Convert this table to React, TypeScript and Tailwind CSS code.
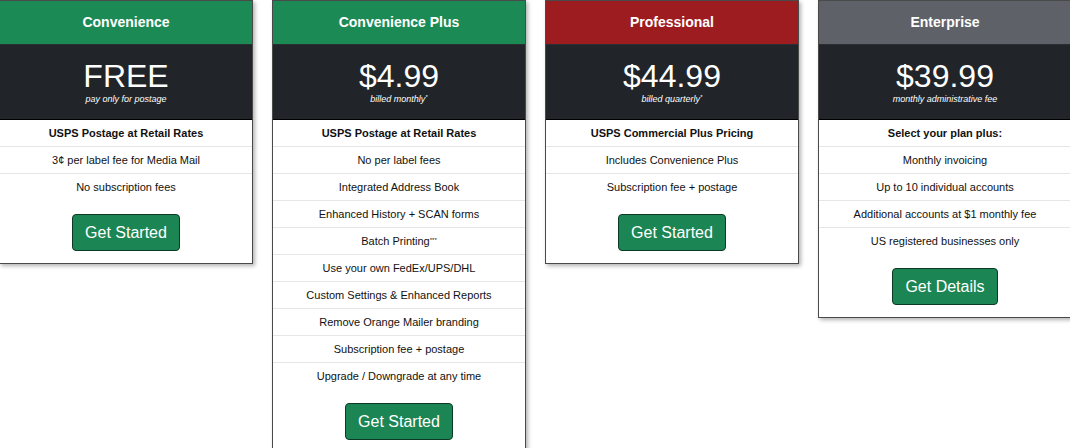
import React from 'react';

type Plan = {
  name: string;
  headerColor: string;
  price: string;
  note: string;
  noteMark?: string;
  features: { text: string; bold?: boolean; mark?: string }[];
  button: string;
};

const plans: Plan[] = [
  {
    name: 'Convenience',
    headerColor: 'bg-[#1c8a55]',
    price: 'FREE',
    note: 'pay only for postage',
    features: [
      { text: 'USPS Postage at Retail Rates', bold: true },
      { text: '3¢ per label fee for Media Mail' },
      { text: 'No subscription fees' },
    ],
    button: 'Get Started',
  },
  {
    name: 'Convenience Plus',
    headerColor: 'bg-[#1c8a55]',
    price: '$4.99',
    note: 'billed monthly',
    noteMark: '*',
    features: [
      { text: 'USPS Postage at Retail Rates', bold: true },
      { text: 'No per label fees' },
      { text: 'Integrated Address Book' },
      { text: 'Enhanced History + SCAN forms' },
      { text: 'Batch Printing', mark: '***' },
      { text: 'Use your own FedEx/UPS/DHL' },
      { text: 'Custom Settings & Enhanced Reports' },
      { text: 'Remove Orange Mailer branding' },
      { text: 'Subscription fee + postage' },
      { text: 'Upgrade / Downgrade at any time' },
    ],
    button: 'Get Started',
  },
  {
    name: 'Professional',
    headerColor: 'bg-[#9d1c1f]',
    price: '$44.99',
    note: 'billed quarterly',
    noteMark: '*',
    features: [
      { text: 'USPS Commercial Plus Pricing', bold: true },
      { text: 'Includes Convenience Plus' },
      { text: 'Subscription fee + postage' },
    ],
    button: 'Get Started',
  },
  {
    name: 'Enterprise',
    headerColor: 'bg-[#5e6268]',
    price: '$39.99',
    note: 'monthly administrative fee',
    features: [
      { text: 'Select your plan plus:', bold: true },
      { text: 'Monthly invoicing' },
      { text: 'Up to 10 individual accounts' },
      { text: 'Additional accounts at $1 monthly fee' },
      { text: 'US registered businesses only' },
    ],
    button: 'Get Details',
  },
];

function PlanCard({ plan }: { plan: Plan }) {
  return (
    <div className="w-[254px] shrink-0 bg-white border border-[#4a4a4a] shadow-[2px_2px_4px_rgba(0,0,0,0.3)]">
      <div className={`${plan.headerColor} h-[44px] flex items-center justify-center text-white font-bold text-[14px] border-b border-[#2b2f33]`}>
        {plan.name}
      </div>
      <div className="bg-[#212529] h-[75px] flex flex-col items-center justify-center text-white border-b border-black">
        <div className="text-[32px] leading-[32px]">{plan.price}</div>
        <div className="text-[9px] leading-[12px] italic mt-px">
          {plan.note}
          {plan.noteMark && <sup className="text-[6px]">{plan.noteMark}</sup>}
        </div>
      </div>
      <div className="divide-y divide-[#e6e6e6]">
        {plan.features.map((f, i) => (
          <div
            key={i}
            className={`h-[27px] flex items-center justify-center text-[11px] text-[#111] ${f.bold ? 'font-bold' : ''}`}
          >
            <span>
              {f.text}
              {f.mark && <sup className="text-[6px]">{f.mark}</sup>}
            </span>
          </div>
        ))}
      </div>
      <div className="flex justify-center pt-[13px] pb-[12px]">
        <button className="h-[37px] px-3 bg-[#1c8554] border border-[#0d3a25] rounded-[4px] text-white text-[16px]">
          {plan.button}
        </button>
      </div>
    </div>
  );
}

export default function App() {
  return (
    <div
      className="w-[1070px] h-[448px] overflow-hidden bg-white"
      style={{ fontFamily: '"Liberation Sans", Arial, sans-serif' }}
    >
      <div className="flex items-start gap-[19px] -ml-px">
        {plans.map(plan => (
          <PlanCard key={plan.name} plan={plan} />
        ))}
      </div>
    </div>
  );
}
